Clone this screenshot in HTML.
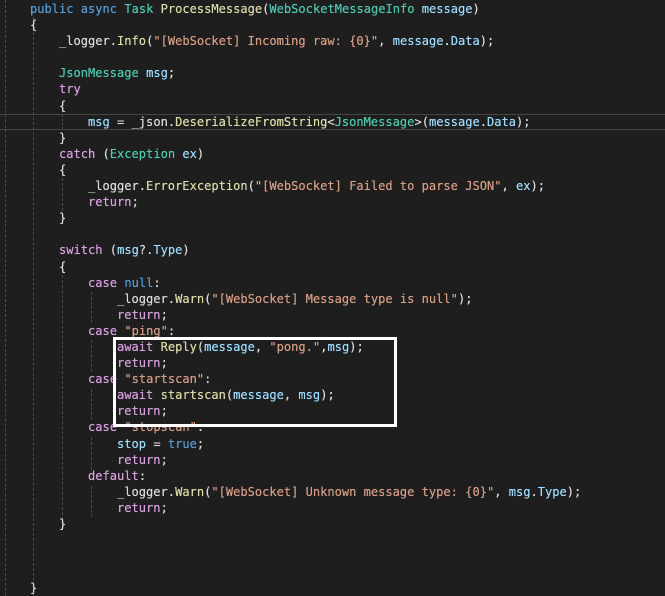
<html><head><style>
body{margin:0;background:#1e1e1e;width:665px;height:596px;overflow:hidden;position:relative}
pre{position:absolute;left:30px;top:1px;margin:0;font-family:"DejaVu Sans Mono","Liberation Mono",monospace;font-size:12.05px;line-height:16.1px;color:#dcdcdc;text-shadow:0 0 0.4px currentColor}
.k{color:#569cd6}.c{color:#d8a0df}.t{color:#4ec9b0}.m{color:#dcdcaa}.v{color:#9cdcfe}.s{color:#d69d85}
.g{position:absolute;width:0;border-left:1px dashed #4a4a4a}
.hl{position:absolute;left:0;width:665px;top:114px;height:14px;border-top:1px solid #464646;border-bottom:1px solid #464646}
.box{position:absolute;left:113px;top:337px;width:278px;height:84px;border:3px solid #fff}
</style></head><body>
<div class="hl"></div>
<div class="g" style="left:5px;top:0;height:596px"></div>
<div class="g" style="left:33px;top:17px;height:579px"></div>
<div class="g" style="left:62px;top:114px;height:16px"></div>
<div class="g" style="left:62px;top:178px;height:33px"></div>
<div class="g" style="left:62px;top:265px;height:255px"></div>
<div class="g" style="left:91px;top:292px;height:31px"></div>
<div class="g" style="left:91px;top:340px;height:32px"></div>
<div class="g" style="left:91px;top:389px;height:31px"></div>
<div class="g" style="left:91px;top:437px;height:33px"></div>
<div class="g" style="left:91px;top:486px;height:31px"></div>
<pre><span class="k">public</span> <span class="k">async</span> <span class="t">Task</span> <span class="m">ProcessMessage</span>(<span class="t">WebSocketMessageInfo</span> <span class="v">message</span>)
{
    _logger.<span class="m">Info</span>(<span class="s">"[WebSocket] Incoming raw: {0}"</span>, <span class="v">message</span>.<span class="v">Data</span>);

    <span class="t">JsonMessage</span> <span class="v">msg</span>;
    <span class="c">try</span>
    {
        <span class="v">msg</span> = _json.<span class="m">DeserializeFromString</span>&lt;<span class="t">JsonMessage</span>&gt;(<span class="v">message</span>.<span class="v">Data</span>);
    }
    <span class="c">catch</span> (<span class="t">Exception</span> <span class="v">ex</span>)
    {
        _logger.<span class="m">ErrorException</span>(<span class="s">"[WebSocket] Failed to parse JSON"</span>, <span class="v">ex</span>);
        <span class="c">return</span>;
    }

    <span class="c">switch</span> (<span class="v">msg</span>?.<span class="v">Type</span>)
    {
        <span class="c">case</span> <span class="k">null</span>:
            _logger.<span class="m">Warn</span>(<span class="s">"[WebSocket] Message type is null"</span>);
            <span class="c">return</span>;
        <span class="c">case</span> <span class="s">"ping"</span>:
            <span class="c">await</span> <span class="m">Reply</span>(<span class="v">message</span>, <span class="s">"pong."</span>,<span class="v">msg</span>);
            <span class="c">return</span>;
        <span class="c">case</span> <span class="s">"startscan"</span>:
            <span class="c">await</span> <span class="m">startscan</span>(<span class="v">message</span>, <span class="v">msg</span>);
            <span class="c">return</span>;
        <span class="c">case</span> <span class="s">"stopscan"</span>:
            <span class="v">stop</span> = <span class="k">true</span>;
            <span class="c">return</span>;
        <span class="c">default</span>:
            _logger.<span class="m">Warn</span>(<span class="s">"[WebSocket] Unknown message type: {0}"</span>, <span class="v">msg</span>.<span class="v">Type</span>);
            <span class="c">return</span>;
    }



}</pre>
<div class="box"></div>
</body></html>
